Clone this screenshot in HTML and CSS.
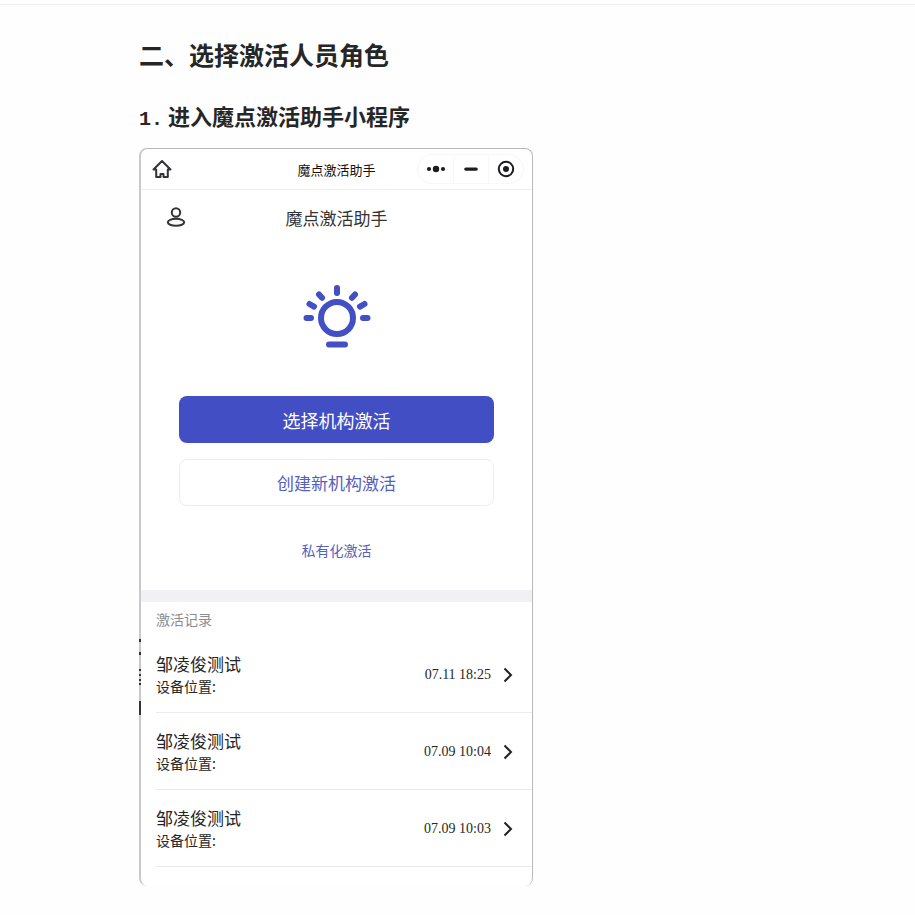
FILE: index.html
```html
<!DOCTYPE html>
<html lang="zh-CN">
<head>
<meta charset="utf-8">
<meta name="viewport" content="width=device-width, initial-scale=1">
<title>魔点激活助手</title>
<link rel="stylesheet" href="styles.css">
</head>
<body>
<main class="article">
  <h2 class="section-title">二、选择激活人员角色</h2>
  <h3 class="step-title"><span class="step-number">1.</span> 进入魔点激活助手小程序</h3>
  <div class="phone">
    <svg class="edge-marks" viewBox="0 0 2 76" aria-hidden="true"><path d="M0 0h2v3H0zM0 13h2v3H0zM0 30h2v2H0zM0 35h2v2H0zM0 40h2v2H0zM0 44h2v2H0zM0 62h2v14H0z"/></svg>
    <header class="titlebar">
      <button class="icon-button" type="button" aria-label="首页">
        <svg class="icon-home" viewBox="0 0 20 20"><path d="M1.500 10.500 10 2 18.500 10.500H15.800V18H11.500V15H8.500V18H4.200V10.500Z"/></svg>
      </button>
      <span class="titlebar-name">魔点激活助手</span>
      <div class="capsule">
        <button class="capsule-button" type="button" aria-label="更多">
          <svg viewBox="0 0 20 20"><circle cx="3" cy="10" r="2.100"/><circle cx="10" cy="10" r="3.200"/><circle cx="17" cy="10" r="2.100"/></svg>
        </button>
        <button class="capsule-button" type="button" aria-label="最小化">
          <svg viewBox="0 0 20 20"><rect x="3.200" y="8.500" width="13.600" height="3.200" rx="1.600"/></svg>
        </button>
        <button class="capsule-button" type="button" aria-label="关闭">
          <svg viewBox="0 0 20 20"><circle class="ring" cx="10" cy="10" r="7.200"/><circle cx="10" cy="10" r="3"/></svg>
        </button>
      </div>
    </header>
    <div class="appbar">
      <button class="icon-button" type="button" aria-label="我的">
        <svg class="icon-user" viewBox="0 0 20 20"><circle cx="10" cy="5.500" r="4.200"/><ellipse cx="10" cy="15.300" rx="8.200" ry="3.500"/></svg>
      </button>
      <span class="appbar-name">魔点激活助手</span>
    </div>
    <section class="actions">
      <svg class="bulb" viewBox="0 0 70 66" aria-hidden="true">
        <circle cx="35" cy="35" r="16" stroke-width="6"/>
        <path stroke-width="6" d="M35 5v5M17 11.500l3 3.200M53 11.500l-3 3.200M7.500 21l4.500 2.600M62.500 21l-4.500 2.600M4.500 35h4.500M61 35h4.500M27 61.500h16"/>
      </svg>
      <button class="button primary" type="button">选择机构激活</button>
      <button class="button secondary" type="button">创建新机构激活</button>
      <a class="private-link" href="#private">私有化激活</a>
    </section>
    <section class="records">
      <h4 class="records-title">激活记录</h4>
      <ul class="record-list">
        <li><a class="record" href="#record-1">
          <span class="record-text"><span class="record-name">邹凌俊测试</span><span class="record-place">设备位置:</span></span>
          <time class="record-time">07.11 18:25</time>
          <svg class="chevron" viewBox="0 0 10 16"><path d="M1.500 1.500 8 8 1.500 14.500"/></svg>
        </a></li>
        <li><a class="record" href="#record-2">
          <span class="record-text"><span class="record-name">邹凌俊测试</span><span class="record-place">设备位置:</span></span>
          <time class="record-time">07.09 10:04</time>
          <svg class="chevron" viewBox="0 0 10 16"><path d="M1.500 1.500 8 8 1.500 14.500"/></svg>
        </a></li>
        <li><a class="record" href="#record-3">
          <span class="record-text"><span class="record-name">邹凌俊测试</span><span class="record-place">设备位置:</span></span>
          <time class="record-time">07.09 10:03</time>
          <svg class="chevron" viewBox="0 0 10 16"><path d="M1.500 1.500 8 8 1.500 14.500"/></svg>
        </a></li>
      </ul>
    </section>
  </div>
</main>
</body>
</html>
```
FILE: styles.css
```css
* { box-sizing: border-box; }

body {
  margin: 4px 0 0;
  border-top: 1px solid #f0f0f0;
  background: #fefefe;
  color: #262626;
  font-family: "Noto Sans CJK SC", sans-serif;
  font-weight: 400;
}

button {
  padding: 0;
  border: 0;
  background: none;
  color: inherit;
  font: inherit;
}

a { color: inherit; text-decoration: none; }

svg { display: block; }

.article {
  max-width: 637px;
  margin: 0 auto;
  padding: 31px 0 28px;
}

.section-title {
  margin: 0 0 26px;
  font-size: 25px;
  font-weight: 700;
  line-height: 36px;
}

.step-title {
  margin: 0 0 16px;
  font-size: 22px;
  font-weight: 700;
  line-height: 34px;
}

.step-number {
  font-family: "Liberation Mono", monospace;
  font-size: 20px;
  line-height: 20px;
}

.phone {
  position: relative;
  max-width: 394px;
  padding-bottom: 19px;
  border: 1px solid #b9b9bb;
  border-left: 2px solid #c9c9cb;
  border-bottom: 0;
  border-radius: 8px;
  background: #fff;
}

.edge-marks {
  position: absolute;
  top: 490px;
  left: -2px;
  width: 2px;
  height: 76px;
  fill: #333;
}

.titlebar {
  display: grid;
  grid-template-columns: 1fr auto 1fr;
  align-items: center;
  height: 41px;
  padding: 0 11px;
  border-bottom: 1px solid #eee;
}

.titlebar-name { color: #111; font-size: 13px; }

.icon-button { justify-self: start; }

.icon-home, .icon-user {
  width: 20px;
  height: 20px;
  fill: none;
  stroke: #333338;
  stroke-width: 2;
  stroke-linejoin: round;
}

.capsule {
  display: flex;
  justify-self: end;
  margin-right: -3px;
  border: 1px solid #f7f7f7;
  border-radius: 15px;
}

.capsule-button {
  display: grid;
  place-items: center;
  width: 35px;
  height: 28px;
}

.capsule-button + .capsule-button { border-left: 1px solid #f7f7f7; }

.capsule-button svg { width: 20px; height: 20px; fill: #1c1c1e; }

.capsule-button .ring { fill: none; stroke: #1c1c1e; stroke-width: 2; }

.appbar {
  display: grid;
  grid-template-columns: 1fr auto 1fr;
  align-items: center;
  height: 54px;
  padding: 0 25px;
}

.appbar-name { color: #333; font-size: 17px; }

.actions {
  display: flex;
  flex-direction: column;
  align-items: center;
  padding: 39px 38px 28px;
}

.bulb {
  width: 70px;
  height: 66px;
  margin-bottom: 47px;
  fill: none;
  stroke: #434fc4;
  stroke-linecap: round;
}

.button {
  width: 100%;
  height: 47px;
  border-radius: 8px;
}

.primary {
  margin-bottom: 16px;
  background: #424ec3;
  color: #fff;
  font-size: 18px;
}

.secondary {
  margin-bottom: 32px;
  border: 1px solid #ededf0;
  color: #5560bd;
  font-size: 17px;
}

.private-link {
  color: #5560bd;
  font-size: 14px;
  line-height: 24px;
}

.records { border-top: 12px solid #f1f1f5; }

.records-title {
  margin: 0;
  padding: 5px 15px;
  color: #8c8c90;
  font-size: 14px;
  font-weight: 400;
  line-height: 24px;
}

.record-list {
  margin: 0;
  padding: 0 0 0 15px;
  list-style: none;
}

.record {
  display: flex;
  align-items: center;
  height: 77px;
  padding: 2px 19px 0 0;
  border-bottom: 1px solid #ececee;
}

.record-text {
  display: flex;
  flex: 1;
  flex-direction: column;
}

.record-name { font-size: 17px; line-height: 22px; }

.record-place { font-size: 14px; line-height: 22px; }

.record-time {
  margin-right: 12px;
  font-family: "Liberation Serif", serif;
  font-size: 14px;
}

.chevron {
  width: 10px;
  height: 16px;
  fill: none;
  stroke: #222;
  stroke-width: 2;
}
```
